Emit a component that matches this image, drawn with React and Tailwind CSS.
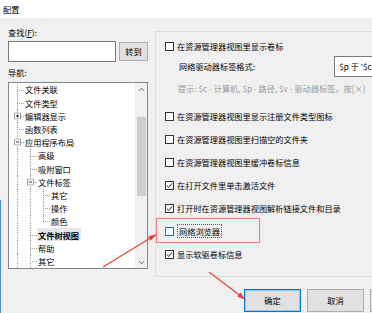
import React from 'react'

// Tree rows: g = ancestor guide columns (true = line continues), last = last sibling, exp = '+' | '-'
const tree = [
  { t: '文件关联', g: [] },
  { t: '文件类型', g: [] },
  { t: '编辑器显示', g: [], exp: '+' },
  { t: '函数列表', g: [] },
  { t: '应用程序布局', g: [], exp: '-' },
  { t: '高级', g: [true] },
  { t: '吸附窗口', g: [true] },
  { t: '文件标签', g: [true], exp: '-' },
  { t: '其它', g: [true, true] },
  { t: '操作', g: [true, true] },
  { t: '颜色', g: [true, true], last: true },
  { t: '文件树视图', g: [true], sel: true },
  { t: '帮助', g: [true] },
  { t: '其它', g: [true] },
]

const options = [
  { t: '在资源管理器视图里显示注册文件类型图标' },
  { t: '在资源管理器视图里扫描空的文件夹' },
  { t: '在资源管理器视图里缓冲卷标信息' },
  { t: '在打开文件里单击激活文件', checked: true },
  { t: '打开时在资源管理器视图解析链接文件和目录', checked: true },
  { t: '网络浏览器', focus: true },
  { t: '显示软驱卷标信息', checked: true },
]

function Check({ checked, focus }) {
  return (
    <span
      className={`flex h-[9px] w-[9px] shrink-0 items-center justify-center border bg-white ${
        focus ? 'border-[#0078d7]' : 'border-[#333333]'
      }`}
    >
      {checked && (
        <svg width="7" height="7" viewBox="0 0 7 7">
          <path d="M0.8 3.6 L2.7 5.4 L6.2 1.3" fill="none" stroke="#222" strokeWidth="1" />
        </svg>
      )}
    </span>
  )
}

function Expander({ sign }) {
  return (
    <svg className="absolute left-[3px] top-1/2 -translate-y-1/2" width="7" height="7" viewBox="0 0 7 7">
      <rect x="0.5" y="0.5" width="6" height="6" fill="#fff" stroke="#a0a0a0" />
      <path d="M2 3.5 H5" stroke="#333" strokeWidth="1" />
      {sign === '+' && <path d="M3.5 2 V5" stroke="#333" strokeWidth="1" />}
    </svg>
  )
}

function TreeRow({ row }) {
  return (
    <div className="flex h-[13.2px] items-center">
      {row.g.map((on, i) => (
        <span key={i} className="relative h-full w-[13px] shrink-0">
          {on && <span className="absolute left-[6px] top-0 h-full border-l border-dotted border-[#a0a0a0]" />}
        </span>
      ))}
      <span className="relative h-full w-[13px] shrink-0">
        <span
          className={`absolute left-[6px] top-0 border-l border-dotted border-[#a0a0a0] ${
            row.last ? 'h-1/2' : 'h-full'
          }`}
        />
        <span className="absolute left-[6px] top-1/2 w-[7px] border-t border-dotted border-[#a0a0a0]" />
        {row.exp && <Expander sign={row.exp} />}
      </span>
      <span
        className={`flex h-full items-center whitespace-nowrap pl-px pr-[2px] ${
          row.sel ? 'bg-[#e8e8e8] font-bold' : ''
        }`}
      >
        {row.t}
      </span>
    </div>
  )
}

function Chevron({ down }) {
  return (
    <svg width="7" height="5" viewBox="0 0 7 5">
      <path d={down ? 'M1 1.2 L3.5 3.7 L6 1.2' : 'M1 3.8 L3.5 1.3 L6 3.8'} fill="none" stroke="#606060" strokeWidth="1" />
    </svg>
  )
}

export default function App() {
  return (
    <div className="relative h-[313px] w-[372px] overflow-hidden bg-[#f0f0f0] font-['Microsoft_YaHei','Noto_Sans_CJK_SC',sans-serif] text-[8.2px] leading-none text-black">
      {/* title bar */}
      <div className="flex h-[18px] items-center bg-white pl-[3px]">配置</div>

      <div className="flex">
        {/* left: search + navigation tree */}
        <div className="ml-[8px] flex w-[140px] shrink-0 flex-col">
          <div className="mt-[7px] flex h-[14px] items-center">
            查找(<span className="underline">F</span>):
          </div>
          <div className="mt-[2px] flex h-[21px] items-center">
            <div className="h-[21px] w-[108px] border border-[#7a7a7a] bg-white" />
            <button className="ml-[3px] flex h-[19px] flex-1 items-center justify-center border border-[#adadad] bg-[#e1e1e1]">
              转到
            </button>
          </div>
          <div className="mt-[3px] flex h-[14px] items-center">导航:</div>
          <div className="mt-[3px] flex h-[187px] border border-[#828790] bg-white">
            <div className="flex-1 overflow-hidden pl-[2px]">
              {tree.map((row, i) => (
                <TreeRow key={i} row={row} />
              ))}
            </div>
            <div className="flex w-[12px] flex-col bg-[#f0f0f0]">
              <div className="flex h-[12px] items-center justify-center">
                <Chevron />
              </div>
              <div className="ml-[2px] mt-[22px] h-[79px] w-[9px] bg-[#cdcdcd]" />
              <div className="flex-1" />
              <div className="flex h-[12px] items-center justify-center">
                <Chevron down />
              </div>
            </div>
          </div>
        </div>

        {/* right: options group + buttons */}
        <div className="ml-[7px] flex flex-col">
          <div className="mt-[13px] h-[246px] w-[240px] border border-[#dcdcdc] pl-[9px]">
            <div className="mt-[5px] flex h-[19px] items-center gap-[3px]">
              <Check />
              <span className="whitespace-nowrap">在资源管理器视图里显示卷标</span>
            </div>
            <div className="flex h-[21px] items-center">
              <span className="w-[170px] whitespace-nowrap pl-[14px]">网络驱动器标签格式:</span>
              <div className="flex h-[21px] w-[60px] items-center border border-[#7a7a7a] bg-white pl-[4px]">$p 于 '$c</div>
            </div>
            <div className="mt-[4px] flex h-[14px] items-center whitespace-nowrap pl-[13px] text-[#9a9a9a]">
              提示: $c - 计算机, $p - 路径, $v - 驱动器标签。按[×]
            </div>
            <div className="mt-[9.5px] flex flex-col">
              {options.map((o, i) => (
                <div key={i} className="flex h-[23px] items-center gap-[3px]">
                  <Check checked={o.checked} focus={o.focus} />
                  <span
                    className={`whitespace-nowrap ${
                      o.focus ? 'border border-dotted border-[#555] px-px py-[2px]' : ''
                    }`}
                  >
                    {o.t}
                  </span>
                </div>
              ))}
            </div>
          </div>
          <div className="ml-[89px] mt-[12px] flex gap-[6px]">
            <button className="flex h-[23px] w-[57px] shrink-0 items-center justify-center border border-[#0078d7] bg-[#e1e1e1] shadow-[inset_0_0_0_1px_#9cc6ea]">
              确定
            </button>
            <button className="flex h-[23px] w-[57px] shrink-0 items-center justify-center border border-[#adadad] bg-[#e1e1e1]">
              取消
            </button>
            <div className="h-[23px] w-[57px] shrink-0 border border-[#adadad] bg-[#e1e1e1]" />
          </div>
        </div>
      </div>

      {/* window edge behind */}
      <span className="absolute bottom-0 left-0 top-[200px] w-px bg-[#4a90d9]" />

      {/* annotation: red highlight box + arrows */}
      <div className="absolute left-[156px] top-[218px] h-[25px] w-[104px] border border-[#ee7d7d] shadow-[0_0_1px_#f5b0b0]" />
      <svg className="pointer-events-none absolute left-0 top-0" width="372" height="313" viewBox="0 0 372 313">
        <line x1="103" y1="267" x2="149.5" y2="238.6" stroke="#e8413a" strokeWidth="1.2" />
        <polygon points="157,234 150.6,240.8 148,236.6" fill="#e8413a" />
        <line x1="209" y1="272" x2="239" y2="294.7" stroke="#e8413a" strokeWidth="1.2" />
        <polygon points="246,300 237.3,296.6 240.3,292.6" fill="#e8413a" />
      </svg>
    </div>
  )
}
